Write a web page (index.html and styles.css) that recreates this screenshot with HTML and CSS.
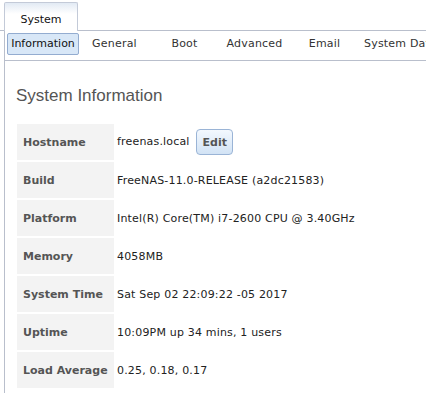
FILE: index.html
```html
<!DOCTYPE html>
<html>
  <head>
    <meta charset="UTF-8">
    <title>System</title>
    <link rel="stylesheet" href="styles.css">
  </head>
  <body>
    <div class="top-tabs">
      <div class="top-tab">System</div>
    </div>
    <div class="panel">
      <div class="sub-tabs">
        <div class="sub-tab active">Information</div>
        <div class="sub-tab">General</div>
        <div class="sub-tab">Boot</div>
        <div class="sub-tab">Advanced</div>
        <div class="sub-tab">Email</div>
        <div class="sub-tab">System Dataset</div>
      </div>
      <div class="content">
        <h2 class="title">System Information</h2>
        <table class="info">
          <tr>
            <th>Hostname</th>
            <td>freenas.local <button class="edit">Edit</button></td>
          </tr>
          <tr>
            <th>Build</th>
            <td>FreeNAS-11.0-RELEASE (a2dc21583)</td>
          </tr>
          <tr>
            <th>Platform</th>
            <td>Intel(R) Core(TM) i7-2600 CPU @ 3.40GHz</td>
          </tr>
          <tr>
            <th>Memory</th>
            <td>4058MB</td>
          </tr>
          <tr>
            <th>System Time</th>
            <td>Sat Sep 02 22:09:22 -05 2017</td>
          </tr>
          <tr>
            <th>Uptime</th>
            <td>10:09PM up 34 mins, 1 users</td>
          </tr>
          <tr>
            <th>Load Average</th>
            <td>0.25, 0.18, 0.17</td>
          </tr>
        </table>
      </div>
    </div>
  </body>
</html>
```

FILE: styles.css
```css
html, body {
  margin: 0;
}

body {
  font-family: "DejaVu Sans", Verdana, sans-serif;
  font-size: 11px;
  color: #222;
  background: #fff;
  height: 399px;
  overflow: hidden;
}

.top-tabs {
  display: flex;
  padding: 2px 0 0 4px;
  height: 28px;
  border-bottom: 1px solid #b9bfcc;
}

.top-tab {
  width: 74px;
  height: 29px;
  box-sizing: border-box;
  padding-top: 10px;
  margin-bottom: -1px;
  text-align: center;
  color: #111;
  border: 1px solid #c3cad8;
  border-bottom: none;
  border-radius: 2px 2px 0 0;
  background: linear-gradient(#e2eaf4, #fff 11px);
}

.panel {
  margin-left: 4px;
  border-left: 1px solid #b9bfcc;
  height: calc(100% - 37px);
  overflow: hidden;
}

.sub-tabs {
  display: flex;
  gap: 1px;
  padding: 2px 0 0 2px;
  height: 27px;
  border-bottom: 1px solid #b9bfcc;
  white-space: nowrap;
  overflow: hidden;
}

.sub-tab {
  flex: none;
  min-width: 69px;
  height: 22px;
  line-height: 20px;
  padding: 0 3px;
  box-sizing: border-box;
  text-align: center;
  color: #333;
  letter-spacing: 0.2px;
  border: 1px solid transparent;
}

.sub-tab.active {
  width: 72px;
  letter-spacing: 0;
  background: #d8e7f7;
  border-color: #93acd0;
  border-radius: 2px;
  color: #111;
}

.content {
  padding-left: 11px;
}

.title {
  margin: 25px 0 18px;
  font-family: "Liberation Sans", Arial, sans-serif;
  font-size: 17px;
  line-height: 20px;
  font-weight: normal;
  color: #555;
}

.info {
  border-collapse: separate;
  border-spacing: 0 2px;
  margin: -2px 0 0 1px;
}

.info th {
  width: 91px;
  height: 36px;
  padding: 0 0 0 6px;
  text-align: left;
  vertical-align: middle;
  background: #f3f3f3;
  color: #555;
  font-weight: bold;
  white-space: nowrap;
}

.info td {
  padding: 0 0 0 3px;
  vertical-align: middle;
  white-space: nowrap;
  letter-spacing: 0.18px;
}

.edit {
  margin-left: 3px;
  width: 37px;
  height: 26px;
  padding: 0;
  font-family: "DejaVu Sans", Verdana, sans-serif;
  font-size: 11px;
  font-weight: bold;
  letter-spacing: 0;
  color: #555;
  border: 1px solid #9ab4d6;
  border-radius: 4px;
  background: linear-gradient(#f3f8fe, #d2e3f5);
  vertical-align: middle;
}
```
